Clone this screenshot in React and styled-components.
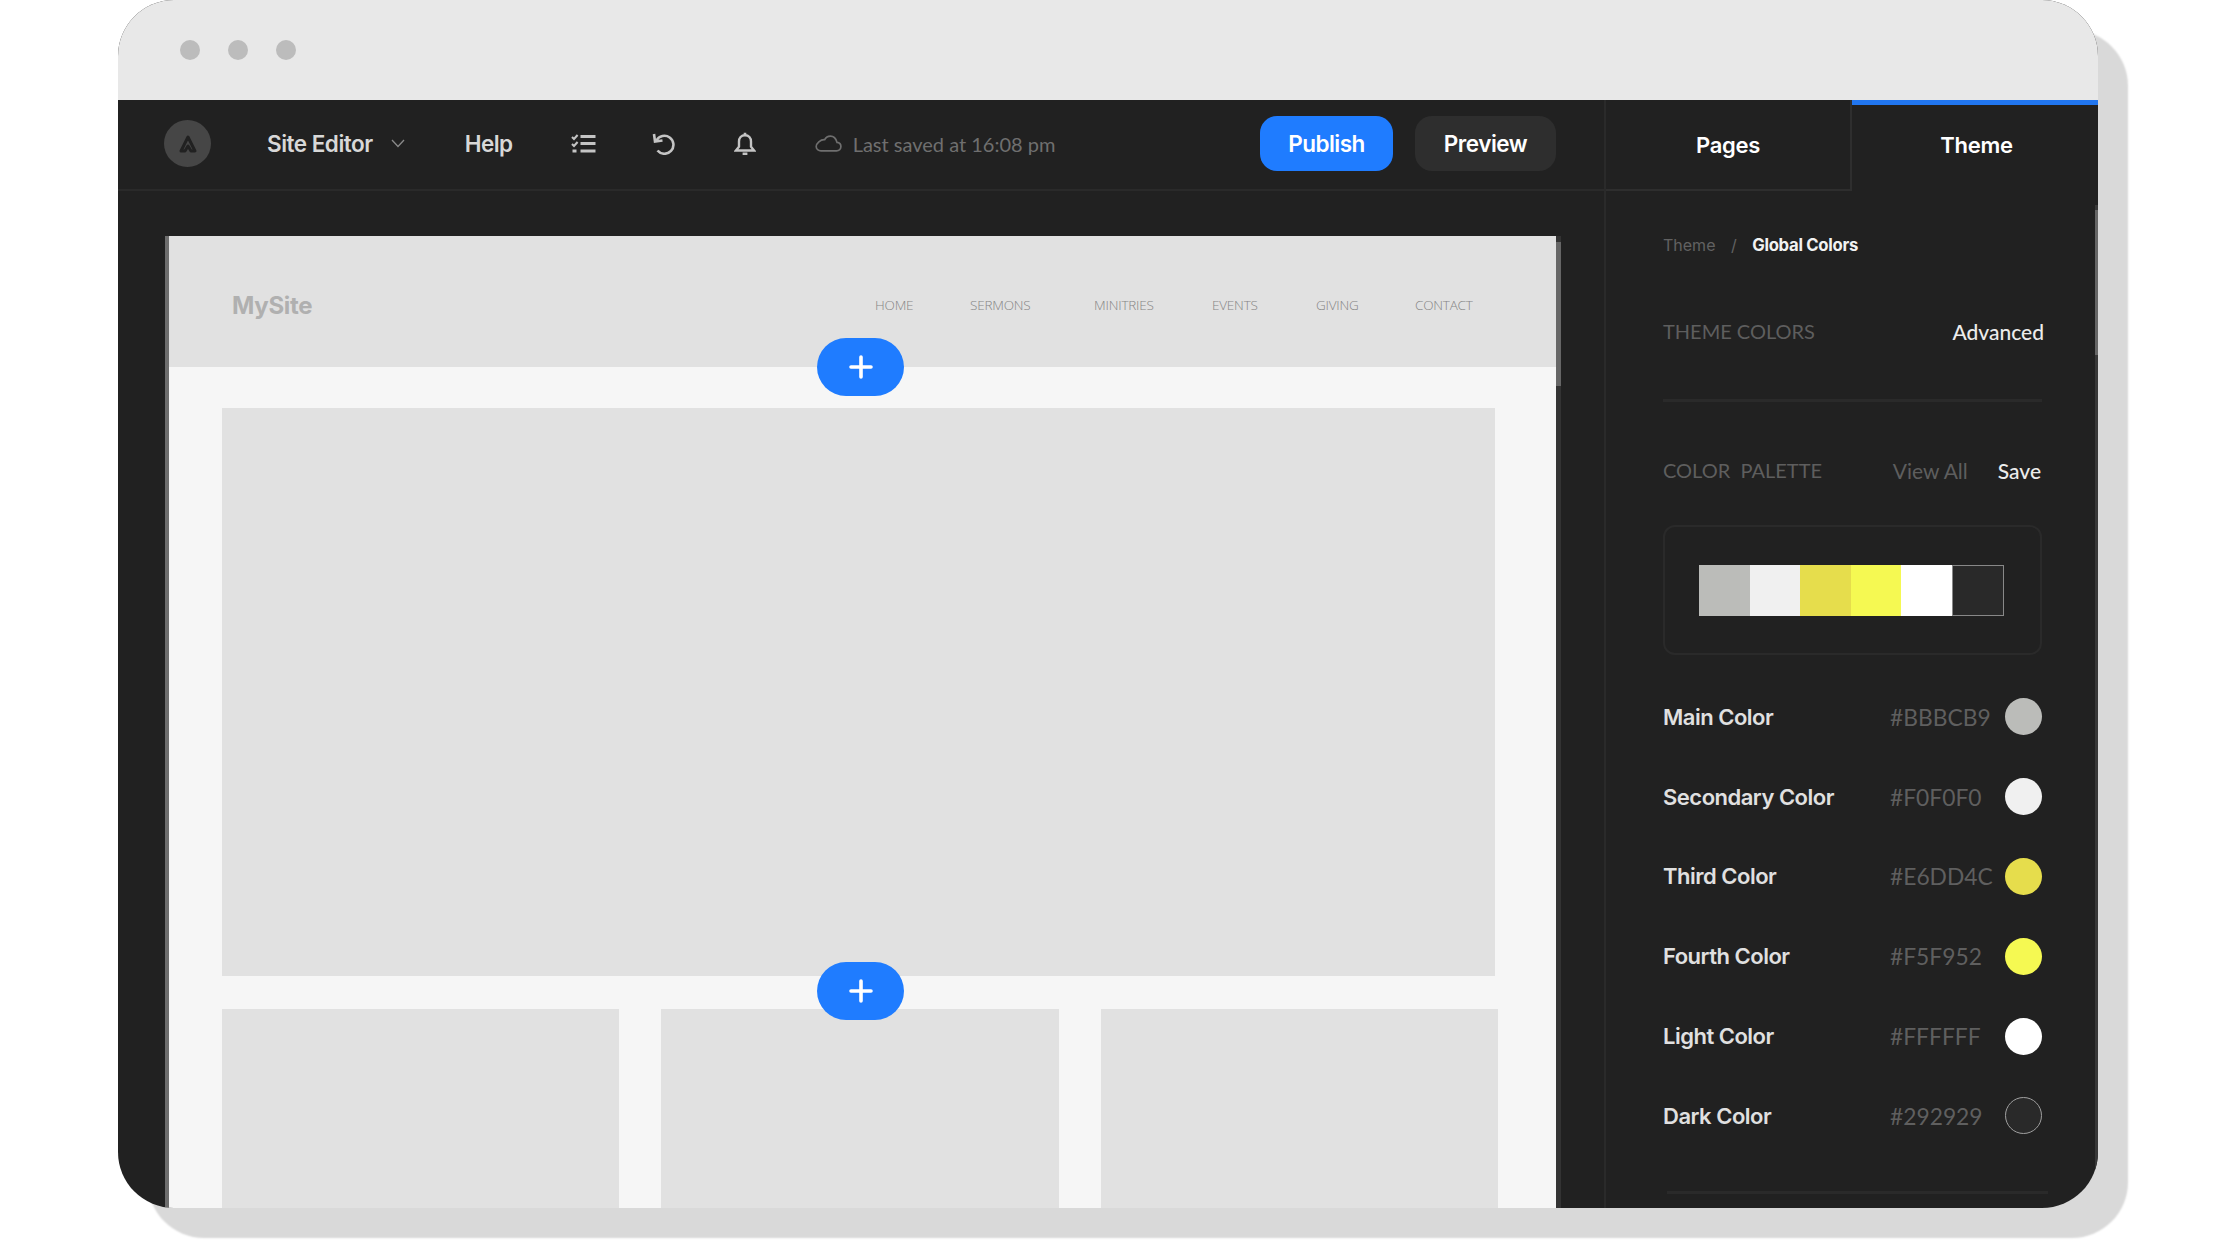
import React from "react";
import styled, { createGlobalStyle } from "styled-components";

const palette = [
  { name: "Main Color", hex: "#BBBCB9", fill: "#bbbcb9" },
  { name: "Secondary Color", hex: "#F0F0F0", fill: "#f0f0f0" },
  { name: "Third Color", hex: "#E6DD4C", fill: "#e6dd4c" },
  { name: "Fourth Color", hex: "#F5F952", fill: "#f5f952" },
  { name: "Light Color", hex: "#FFFFFF", fill: "#ffffff" },
  { name: "Dark Color", hex: "#292929", fill: "#292929", outlined: true },
];

const siteLinks = [
  { label: "HOME", width: 95 },
  { label: "SERMONS", width: 124 },
  { label: "MINITRIES", width: 118 },
  { label: "EVENTS", width: 104 },
  { label: "GIVING", width: 99 },
  { label: "CONTACT", width: 60 },
];

export default function App() {
  return (
    <>
      <GlobalStyle />
      <Root>
        <Window>
          <TitleBar>
            <Dot />
            <Dot />
            <Dot />
          </TitleBar>
          <Workspace>
            <EditorColumn>
              <Toolbar>
                <Logo>
                  <svg width="22" height="20" viewBox="0 0 22 20" fill="none">
                    <path
                      d="M4 17 L11 3 L18 17 L14 17 L11 12 L8 17 Z"
                      stroke="#212121"
                      strokeWidth="3"
                      strokeLinejoin="round"
                    />
                  </svg>
                </Logo>
                <EditorMenu>
                  <MenuLabel>Site Editor</MenuLabel>
                  <svg width="14" height="9" viewBox="0 0 14 9" fill="none">
                    <path d="M1 1l6 6.5L13 1" stroke="#8a8a8a" strokeWidth="1.3" />
                  </svg>
                </EditorMenu>
                <MenuLabel $gap={60}>Help</MenuLabel>
                <ToolIcon $gap={58} width="25" height="20" viewBox="0 0 25 20">
                  <path d="M1 3l2 2 3.6-4M1 10l2 2 3.6-4" strokeWidth="2.1" />
                  <path d="M9.5 2.5h15M9.5 9.5h15M9.5 17h15M1.5 17h4" strokeWidth="2.8" />
                </ToolIcon>
                <ToolIcon $gap={56} width="24" height="22" viewBox="0 0 24 22">
                  <path d="M2 1L3 8.5L10.5 7.5" strokeWidth="2.6" />
                  <path d="M4.5 7.5A9 9 0 1 1 5.5 17.5" strokeWidth="2.6" />
                </ToolIcon>
                <ToolIcon $gap={58} width="22" height="24" viewBox="0 0 22 24">
                  <path
                    d="M11 3.2c-3.8 0-6 2.8-6 6.3v5.2L2 18.5h18l-3-3.8V9.5c0-3.5-2.2-6.3-6-6.3z"
                    strokeWidth="2.4"
                  />
                  <path d="M11 .8v2.4M8.6 21.8h4.8" strokeWidth="2.6" />
                </ToolIcon>
                <SaveState>
                  <svg width="27" height="17" viewBox="0 0 27 17" fill="none">
                    <path
                      d="M6 15.8h15.5c2.6 0 4.4-1.9 4.4-4.2 0-2.2-1.7-4-3.9-4.2C21 3.5 18.6 1.2 15.4 1.2c-2.6 0-4.6 1.3-5.7 3.5C5.4 4.4 1.2 8.6 1.2 11.6c0 2.4 2.2 4.2 4.8 4.2z"
                      stroke="#6f6f6f"
                      strokeWidth="1.7"
                    />
                  </svg>
                  <SaveText>Last saved at 16:08 pm</SaveText>
                </SaveState>
                <Actions>
                  <ActionButton $primary>Publish</ActionButton>
                  <ActionButton>Preview</ActionButton>
                </Actions>
              </Toolbar>
              <Canvas>
                <Sheet>
                  <SiteHeader>
                    <SiteName>MySite</SiteName>
                    <SiteNav>
                      {siteLinks.map((link) => (
                        <SiteLink key={link.label} $width={link.width}>
                          {link.label}
                        </SiteLink>
                      ))}
                    </SiteNav>
                    <AddButton $left={648} $drop={29}>
                      <PlusIcon />
                    </AddButton>
                  </SiteHeader>
                  <SiteBody>
                    <Hero>
                      <AddButton $left={595} $drop={44}>
                        <PlusIcon />
                      </AddButton>
                    </Hero>
                    <Cards>
                      <Card />
                      <Card />
                      <Card />
                    </Cards>
                  </SiteBody>
                </Sheet>
                <SheetScroll>
                  <SheetThumb />
                </SheetScroll>
              </Canvas>
            </EditorColumn>

            <SideColumn>
              <Tabs>
                <Tab>Pages</Tab>
                <Tab $active>Theme</Tab>
              </Tabs>
              <Panel>
                <Breadcrumb>
                  <span>Theme</span>
                  <CrumbSlash>/</CrumbSlash>
                  <strong>Global Colors</strong>
                </Breadcrumb>
                <SectionRow $height={143} $lift={7} $bleed={2}>
                  <SectionTitle>THEME COLORS</SectionTitle>
                  <SideLink $strong>Advanced</SideLink>
                </SectionRow>
                <Divider />
                <SectionRow $height={136}>
                  <SectionTitle>COLOR&nbsp; PALETTE</SectionTitle>
                  <SideLinks>
                    <SideLink>View All</SideLink>
                    <SideLink $strong>Save</SideLink>
                  </SideLinks>
                </SectionRow>
                <PaletteBox>
                  <PaletteBar>
                    {palette.map((color) => (
                      <Swatch key={color.hex} $fill={color.fill} $outlined={color.outlined} />
                    ))}
                  </PaletteBar>
                </PaletteBox>
                <ColorList>
                  {palette.map((color) => (
                    <ColorRow key={color.name}>
                      <ColorName>{color.name}</ColorName>
                      <ColorHex>{color.hex}</ColorHex>
                      <ColorDot $fill={color.fill} $outlined={color.outlined} />
                    </ColorRow>
                  ))}
                </ColorList>
                <BottomDivider />
              </Panel>
              <PanelScroll>
                <PanelThumb />
              </PanelScroll>
            </SideColumn>
          </Workspace>
        </Window>
      </Root>
    </>
  );
}

function PlusIcon() {
  return (
    <svg width="24" height="24" viewBox="0 0 24 24" fill="none">
      <path d="M12 2v20M2 12h20" stroke="#fff" strokeWidth="3.6" strokeLinecap="round" />
    </svg>
  );
}

const GlobalStyle = createGlobalStyle`
  html, body {
    margin: 0;
    padding: 0;
    background: #fff;
  }
  * {
    box-sizing: border-box;
  }
`;

const Root = styled.div`
  width: 2216px;
  height: 1246px;
  padding-left: 118px;
  overflow: hidden;
  font-family: Inter, "Liberation Sans", sans-serif;
`;

const Window = styled.div`
  width: 1980px;
  height: 1208px;
  display: flex;
  flex-direction: column;
  background: #212121;
  border-radius: 56px;
  overflow: hidden;
  box-shadow: 30px 30px 2px #d9d9d9;
`;

const TitleBar = styled.div`
  height: 100px;
  flex: none;
  display: flex;
  align-items: center;
  gap: 28px;
  padding-left: 62px;
  background: #e8e8e8;
`;

const Dot = styled.span`
  width: 20px;
  height: 20px;
  border-radius: 50%;
  background: #bcbcbc;
`;

const Workspace = styled.div`
  flex: 1;
  min-height: 0;
  display: flex;
`;

const EditorColumn = styled.div`
  width: 1486px;
  flex: none;
  display: flex;
  flex-direction: column;
  min-height: 0;
`;

const Toolbar = styled.div`
  height: 91px;
  flex: none;
  display: flex;
  align-items: center;
  padding: 0 48px 2px 46px;
  border-bottom: 2px solid #2a2a2a;
`;

const Logo = styled.div`
  width: 47px;
  height: 47px;
  flex: none;
  display: flex;
  align-items: center;
  justify-content: center;
  border-radius: 50%;
  background: #464646;
`;

const EditorMenu = styled.div`
  display: flex;
  align-items: center;
  gap: 18px;
  margin-left: 56px;
`;

const MenuLabel = styled.span`
  margin-left: ${(p) => p.$gap || 0}px;
  font-size: 22.5px;
  font-weight: 600;
  letter-spacing: -0.5px;
  color: #d8d8d8;
`;

const ToolIcon = styled.svg`
  flex: none;
  margin-left: ${(p) => p.$gap}px;
  fill: none;
  stroke: #c4c4c4;
`;

const SaveState = styled.div`
  display: flex;
  align-items: center;
  gap: 11px;
  margin-left: 59px;
`;

const SaveText = styled.span`
  font-family: Lato, sans-serif;
  font-size: 20px;
  color: #6f6f6f;
`;

const Actions = styled.div`
  margin-left: auto;
  display: flex;
  gap: 22px;
`;

const ActionButton = styled.button`
  height: 55px;
  width: ${(p) => (p.$primary ? "133px" : "141px")};
  padding: 0;
  border: none;
  border-radius: 17px;
  background: ${(p) => (p.$primary ? "#1f7cff" : "#2e2e2e")};
  color: #fff;
  font-family: inherit;
  font-size: 22.5px;
  font-weight: 600;
  letter-spacing: -0.5px;
`;

const Canvas = styled.div`
  flex: 1;
  min-height: 0;
  display: flex;
  padding: 45px 43px 0 47px;
  overflow: hidden;
`;

const Sheet = styled.div`
  flex: 1;
  display: flex;
  flex-direction: column;
  background: #f6f6f6;
  border-left: 4px solid #6e6e6e;
`;

const SiteHeader = styled.div`
  position: relative;
  height: 131px;
  flex: none;
  display: flex;
  align-items: center;
  justify-content: space-between;
  padding: 7px 81px 0 63px;
  background: #e1e1e1;
`;

const SiteName = styled.div`
  font-size: 24px;
  font-weight: 700;
  letter-spacing: -0.3px;
  color: #b0b0b0;
`;

const SiteNav = styled.div`
  display: flex;
`;

const SiteLink = styled.span`
  width: ${(p) => p.$width}px;
  font-family: "Open Sans", sans-serif;
  font-size: 13.5px;
  font-weight: 300;
  letter-spacing: -0.2px;
  white-space: nowrap;
  color: #858585;
`;

const AddButton = styled.button`
  position: absolute;
  left: ${(p) => p.$left}px;
  bottom: -${(p) => p.$drop}px;
  width: 87px;
  height: 58px;
  z-index: 2;
  display: flex;
  align-items: center;
  justify-content: center;
  padding: 0;
  border: none;
  border-radius: 29px;
  background: #1f7cff;
`;

const SiteBody = styled.div`
  flex: 1;
  min-height: 0;
  padding: 41px 58px 0 53px;
  display: flex;
  flex-direction: column;
  gap: 33px;
`;

const Hero = styled.div`
  position: relative;
  height: 568px;
  flex: none;
  width: 1273px;
  background: #e1e1e1;
`;

const Cards = styled.div`
  flex: 1;
  display: grid;
  grid-template-columns: repeat(3, 1fr);
  gap: 42px;
`;

const Card = styled.div`
  background: #e1e1e1;
`;

const SheetScroll = styled.div`
  width: 5px;
  flex: none;
  padding-top: 6px;
  background: #333;
`;

const SheetThumb = styled.div`
  height: 144px;
  background: #666;
`;

const SideColumn = styled.div`
  position: relative;
  flex: 1;
  display: flex;
  flex-direction: column;
  min-height: 0;
  border-left: 2px solid #2a2a2a;
`;

const Tabs = styled.div`
  height: 91px;
  flex: none;
  display: flex;
`;

const Tab = styled.div`
  flex: ${(p) => (p.$active ? "1" : "none")};
  width: ${(p) => (p.$active ? "auto" : "246px")};
  display: flex;
  align-items: center;
  justify-content: center;
  padding-bottom: ${(p) => (p.$active ? "6px" : "0")};
  font-size: 22px;
  font-weight: 600;
  letter-spacing: -0.3px;
  color: #fff;
  border-top: ${(p) => (p.$active ? "5px solid #2176f0" : "none")};
  border-right: ${(p) => (p.$active ? "none" : "2px solid #2e2e2e")};
  border-bottom: ${(p) => (p.$active ? "none" : "2px solid #2e2e2e")};
`;

const Panel = styled.div`
  flex: 1;
  min-height: 0;
  padding: 43px 59px 0 57px;
  display: flex;
  flex-direction: column;
`;

const Breadcrumb = styled.div`
  height: 22px;
  flex: none;
  display: flex;
  align-items: center;
  font-size: 16px;
  color: #616161;
  strong {
    font-size: 16.7px;
    font-weight: 700;
    letter-spacing: -0.3px;
    color: #f2f2f2;
  }
`;

const CrumbSlash = styled.span`
  margin: 0 15.5px;
`;

const SectionRow = styled.div`
  height: ${(p) => p.$height}px;
  flex: none;
  display: flex;
  align-items: center;
  justify-content: space-between;
  padding-top: ${(p) => p.$lift || 0}px;
  margin-right: -${(p) => p.$bleed || 0}px;
`;

const SectionTitle = styled.span`
  font-family: Lato, sans-serif;
  font-size: 20px;
  color: #5e5e5e;
`;

const SideLinks = styled.div`
  display: flex;
  gap: 30px;
  margin-right: 1px;
`;

const SideLink = styled.span`
  font-family: Lato, sans-serif;
  font-size: 21px;
  font-weight: ${(p) => (p.$strong ? 500 : 400)};
  color: ${(p) => (p.$strong ? "#ececec" : "#5e5e5e")};
`;

const Divider = styled.div`
  height: 3px;
  flex: none;
  background: #2a2a2a;
`;

const PaletteBox = styled.div`
  height: 130px;
  flex: none;
  display: flex;
  align-items: center;
  justify-content: center;
  padding-right: 2px;
  margin-top: -13px;
  border: 2px solid #2a2a2a;
  border-radius: 12px;
`;

const PaletteBar = styled.div`
  width: 305px;
  height: 51px;
  display: flex;
`;

const Swatch = styled.span`
  flex: 1;
  background: ${(p) => p.$fill};
  border: ${(p) => (p.$outlined ? "1px solid #888" : "none")};
`;

const ColorList = styled.div`
  margin-top: 22px;
  flex: none;
  display: flex;
  flex-direction: column;
`;

const ColorRow = styled.div`
  height: 79.8px;
  display: flex;
  align-items: center;
`;

const ColorName = styled.span`
  width: 227px;
  font-size: 22px;
  font-weight: 600;
  letter-spacing: -0.5px;
  color: #e0e0e0;
`;

const ColorHex = styled.span`
  width: 115px;
  font-family: Lato, sans-serif;
  font-size: 22.8px;
  color: #5f5f5f;
`;

const ColorDot = styled.span`
  width: 37px;
  height: 37px;
  border-radius: 50%;
  background: ${(p) => p.$fill};
  border: ${(p) => (p.$outlined ? "1.5px solid #a0a0a0" : "none")};
`;

const BottomDivider = styled.div`
  height: 3px;
  flex: none;
  margin: 35px -6px 0 4px;
  background: #2a2a2a;
`;

const PanelScroll = styled.div`
  position: absolute;
  top: 105px;
  right: 0;
  bottom: 0;
  width: 6px;
  padding-top: 5px;
  background: #383838;
`;

const PanelThumb = styled.div`
  height: 145px;
  background: #666;
`;
